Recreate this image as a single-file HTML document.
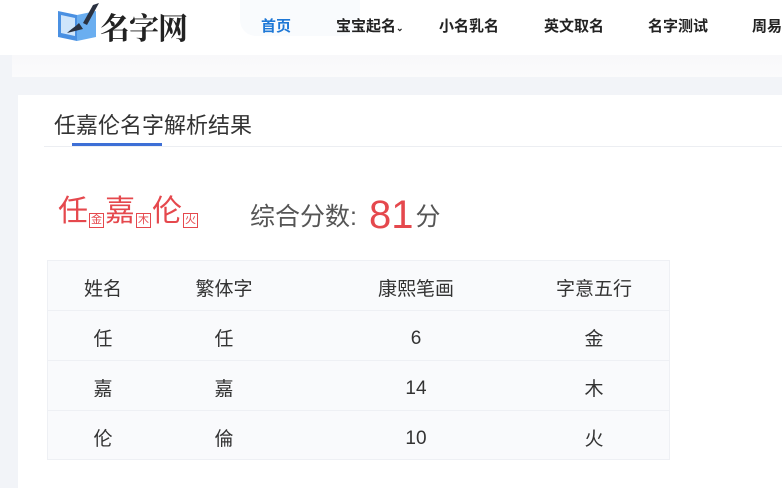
<!DOCTYPE html>
<html><head><meta charset="utf-8"><style>
*{margin:0;padding:0;box-sizing:border-box}
body{width:782px;height:488px;overflow:hidden;background:#f2f4f8;font-family:"Liberation Sans","Noto Sans CJK SC",sans-serif;position:relative}
.hdr{position:absolute;left:0;top:0;width:782px;height:55px;background:#fff}
.ghost{position:absolute;left:240px;top:0;width:120px;height:36px;background:#f9fbfd;border-radius:0 0 16px 16px}
.logo{position:absolute;left:57px;top:3px}
.logotxt{position:absolute;left:100px;top:4px;font-size:30px;font-weight:bold;color:#222;font-family:"Noto Serif CJK SC",serif;letter-spacing:-1px}
.nav{position:absolute;top:15px;font-size:15px;font-weight:bold;color:#222}
.band{position:absolute;left:12px;top:55px;width:770px;height:22px;background:linear-gradient(#f8f8fa,#fbfbfc)}
.card{position:absolute;left:18px;top:95px;width:764px;height:393px;background:#fff}
.title{position:absolute;left:54px;top:108px;font-size:22px;color:#333}
.ul{position:absolute;left:72px;top:143px;width:90px;height:3px;background:#3d6fd6}
.div{position:absolute;left:44px;top:146px;width:738px;height:1px;background:#eceef2}
.name{position:absolute;left:58px;top:186px;color:#e5484d;font-size:30px;white-space:nowrap}
.name i{font-style:normal;font-size:11px;border:1px solid #e5484d;padding:0 1px;vertical-align:-2px;margin:0 1px;line-height:13px;display:inline-block}
.score{position:absolute;left:250px;top:190px;font-size:25px;color:#555;white-space:nowrap}
.score b{font-weight:normal;color:#e5484d;font-size:40px;position:relative;top:3px;margin:0 2px 0 12px}
.tbl{position:absolute;left:47px;top:260px;width:623px;height:200px;background:#f9fafc;border:1px solid #eef0f4}
.row{position:absolute;left:0;width:621px;height:50px;border-bottom:1px solid #eef0f4}
.c{position:absolute;top:13px;font-size:19px;color:#333;transform:translateX(-50%);white-space:nowrap}
.n{top:14px}
</style></head><body>
<div class="hdr">
<div class="ghost"></div>
<svg class="logo" width="44" height="40" viewBox="0 0 44 40"><path d="M1 8 L20 12 L20 38 L1 34Z" fill="#4a90e2"/><path d="M20 12 L39 8 L39 34 L20 38Z" fill="#6aaef0"/><path d="M4 12 L18 15 L18 33 L4 30Z" fill="#cfe5fb"/><path d="M36 2 L42 0 L30 22 L26 20Z" fill="#2a3140"/><path d="M22 20 C18 24 14 26 10 30 L26 26Z" fill="#2a3140"/></svg>
<div class="logotxt">名字网</div>
<div class="nav" style="left:261px;color:#1e78d6">首页</div>
<div class="nav" style="left:336px">宝宝起名<span style="font-size:9px">⌄</span></div>
<div class="nav" style="left:439px">小名乳名</div>
<div class="nav" style="left:544px">英文取名</div>
<div class="nav" style="left:648px">名字测试</div>
<div class="nav" style="left:752px">周易</div>
</div>
<div class="band"></div>
<div class="card"></div>
<div class="title">任嘉伦名字解析结果</div>
<div class="ul"></div><div class="div"></div>
<div class="name">任<i>金</i>嘉<i>木</i>伦<i>火</i></div>
<div class="score">综合分数:<b>81</b>分</div>
<div class="tbl">
<div class="row" style="top:0"><span class="c" style="left:55px">姓名</span><span class="c" style="left:176px">繁体字</span><span class="c" style="left:368px">康熙笔画</span><span class="c" style="left:546px">字意五行</span></div>
<div class="row" style="top:50px"><span class="c" style="left:55px">任</span><span class="c" style="left:176px">任</span><span class="c n" style="left:368px;top:17px">6</span><span class="c" style="left:546px">金</span></div>
<div class="row" style="top:100px"><span class="c" style="left:55px">嘉</span><span class="c" style="left:176px">嘉</span><span class="c n" style="left:368px;top:17px">14</span><span class="c" style="left:546px">木</span></div>
<div class="row" style="top:150px;border:none"><span class="c" style="left:55px">伦</span><span class="c" style="left:176px">倫</span><span class="c n" style="left:368px;top:17px">10</span><span class="c" style="left:546px">火</span></div>
</div>
</body></html>
